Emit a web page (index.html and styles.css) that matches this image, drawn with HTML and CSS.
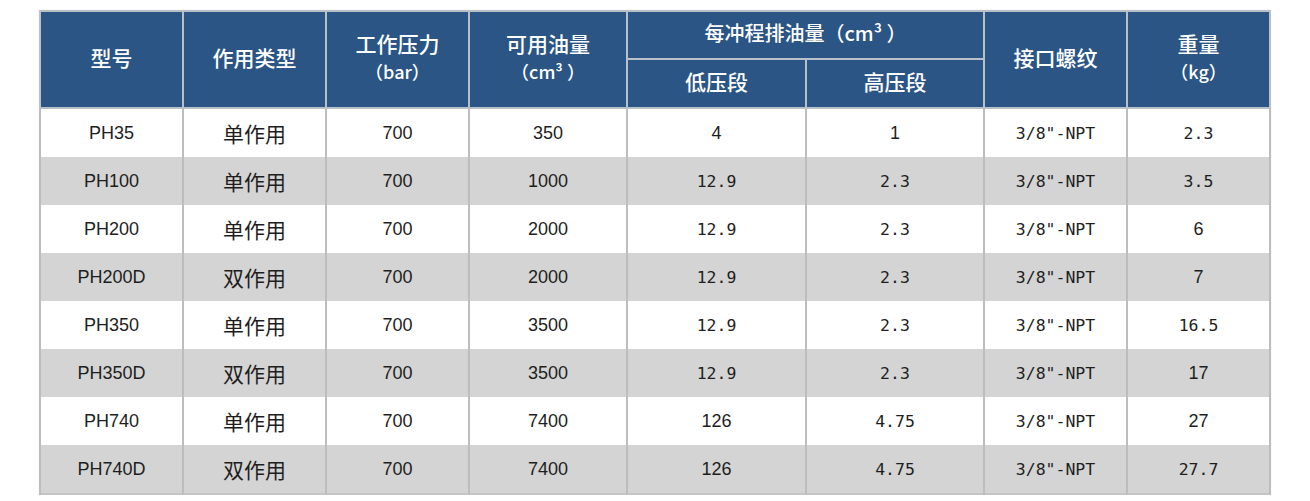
FILE: index.html
```html
<!DOCTYPE html>
<html lang="zh">
<head>
<meta charset="utf-8">
<link rel="stylesheet" href="styles.css">
</head>
<body>
<table class="spec">
  <colgroup>
    <col class="c143"><col class="c143"><col class="c143"><col class="c158"><col class="c179"><col class="c178"><col class="c143"><col class="c143">
  </colgroup>
  <thead>
    <tr class="h1">
      <th rowspan="2">型号</th>
      <th rowspan="2">作用类型</th>
      <th rowspan="2">工作压力<br><span class="unit">（bar）</span></th>
      <th rowspan="2">可用油量<br><span class="unit">（cm³ ）</span></th>
      <th colspan="2" class="group">每冲程排油量（cm³ ）</th>
      <th rowspan="2">接口螺纹</th>
      <th rowspan="2">重量<br><span class="unit">（kg）</span></th>
    </tr>
    <tr class="h2">
      <th>低压段</th>
      <th>高压段</th>
    </tr>
  </thead>
  <tbody>
    <tr><td class="m">PH35</td><td class="z">单作用</td><td class="a">700</td><td class="a">350</td><td class="a">4</td><td class="a">1</td><td class="n">3/8"-NPT</td><td class="n">2.3</td></tr>
    <tr><td class="m">PH100</td><td class="z">单作用</td><td class="a">700</td><td class="a">1000</td><td class="n">12.9</td><td class="n">2.3</td><td class="n">3/8"-NPT</td><td class="n">3.5</td></tr>
    <tr><td class="m">PH200</td><td class="z">单作用</td><td class="a">700</td><td class="a">2000</td><td class="n">12.9</td><td class="n">2.3</td><td class="n">3/8"-NPT</td><td class="a">6</td></tr>
    <tr><td class="m">PH200D</td><td class="z">双作用</td><td class="a">700</td><td class="a">2000</td><td class="n">12.9</td><td class="n">2.3</td><td class="n">3/8"-NPT</td><td class="a">7</td></tr>
    <tr><td class="m">PH350</td><td class="z">单作用</td><td class="a">700</td><td class="a">3500</td><td class="n">12.9</td><td class="n">2.3</td><td class="n">3/8"-NPT</td><td class="n">16.5</td></tr>
    <tr><td class="m">PH350D</td><td class="z">双作用</td><td class="a">700</td><td class="a">3500</td><td class="n">12.9</td><td class="n">2.3</td><td class="n">3/8"-NPT</td><td class="a">17</td></tr>
    <tr><td class="m">PH740</td><td class="z">单作用</td><td class="a">700</td><td class="a">7400</td><td class="a">126</td><td class="n">4.75</td><td class="n">3/8"-NPT</td><td class="a">27</td></tr>
    <tr><td class="m">PH740D</td><td class="z">双作用</td><td class="a">700</td><td class="a">7400</td><td class="a">126</td><td class="n">4.75</td><td class="n">3/8"-NPT</td><td class="n">27.7</td></tr>
  </tbody>
</table>
</body>
</html>
```
FILE: styles.css
```css
html, body {
  margin: 0;
  padding: 0;
  background: #ffffff;
}
body {
  padding: 10px 0 0 39px;
  font-family: "Noto Sans CJK SC", "Liberation Sans", sans-serif;
}
.spec {
  border-collapse: collapse;
  table-layout: fixed;
  width: 1232px;
  border: 2px solid #c4c4c4;
  box-shadow: 0 0 1px #dddddd;
}
.c143 { width: 143px; }
.c158 { width: 158px; }
.c179 { width: 179px; }
.c178 { width: 178px; }

.spec th {
  background: #2a5585;
  color: #ffffff;
  font-family: "Noto Sans CJK SC", sans-serif;
  font-weight: 500;
  font-size: 21px;
  line-height: 27px;
  border: 2px solid #b9c0c8;
  padding: 0 0 5px 0;
  text-align: center;
  vertical-align: middle;
  text-spacing-trim: space-all;
}
.spec .unit {
  font-size: 18px;
  font-weight: 500;
  text-spacing-trim: space-all;
}
.spec th.group {
  font-size: 20px;
}
.h1 { height: 48px; }
.h2 { height: 49px; }

.spec td {
  height: 48px;
  padding: 0;
  text-align: center;
  vertical-align: middle;
  color: #1e1e1e;
  border-left: 2px solid #bdbdbd;
  border-right: 2px solid #bdbdbd;
  font-size: 18px;
}
.spec tbody tr:nth-child(even) td {
  background: #d3d4d3;
}
.spec tbody tr:nth-child(odd) td {
  background: #ffffff;
}
.spec td.m {
  font-family: "Liberation Sans", Arial, sans-serif;
  font-size: 18px;
}
.spec td.z {
  font-family: "Noto Sans CJK SC", sans-serif;
  font-size: 21px;
}
.spec td.a {
  font-family: "Liberation Sans", Arial, sans-serif;
  font-size: 18px;
}
.spec td.n {
  font-family: "DejaVu Sans Mono", monospace;
  font-size: 16.5px;
}
```
